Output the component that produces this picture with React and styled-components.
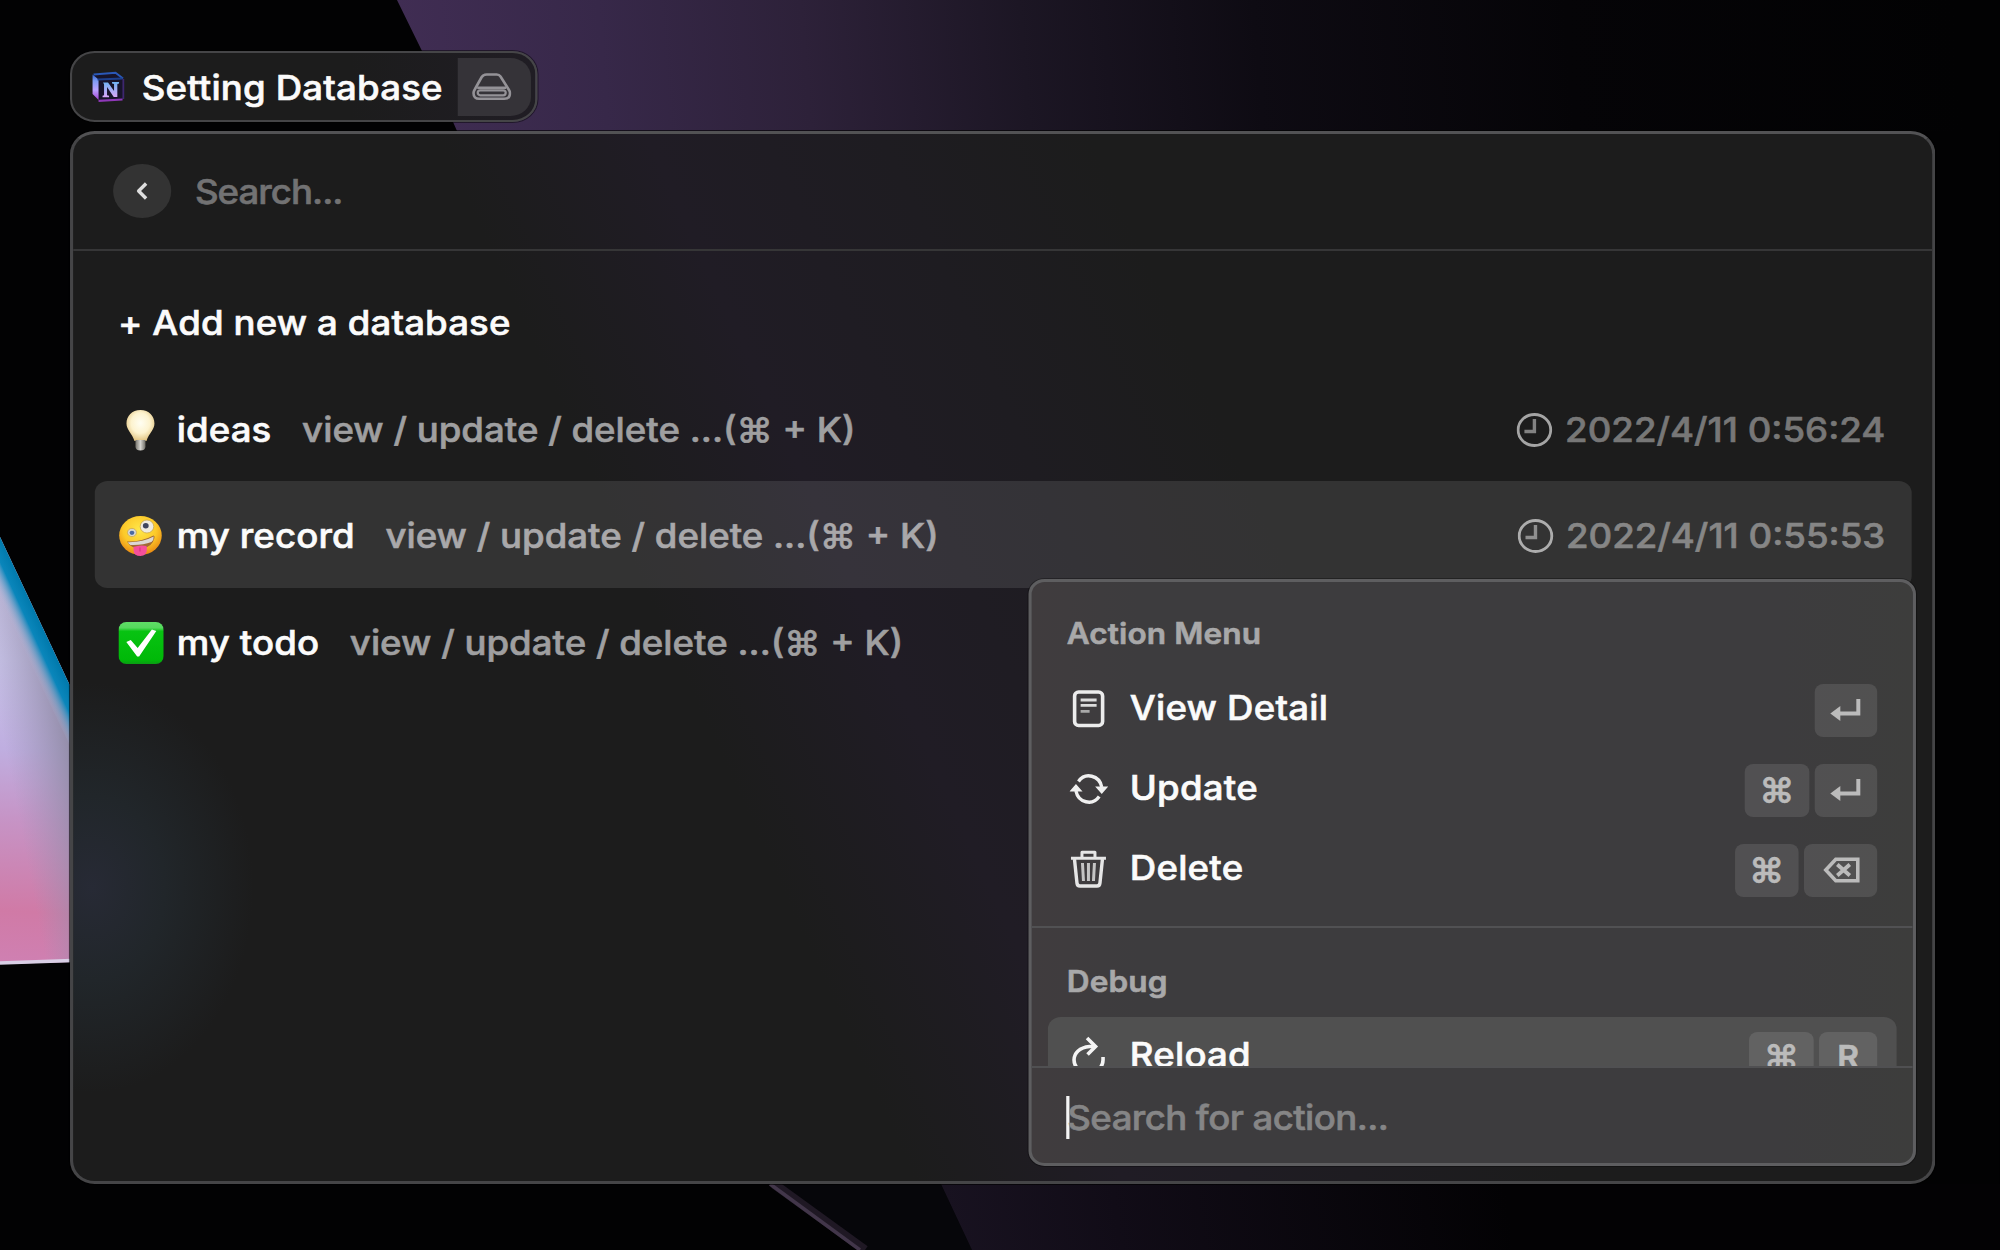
import React from 'react';
import styled, { createGlobalStyle, css } from 'styled-components';

/* The whole desktop is drawn slightly wider than its natural proportions. */
const STRETCH = 1.077;

const GlobalStyle = createGlobalStyle`
  *, *::before, *::after { box-sizing: border-box; }
  html, body { margin: 0; padding: 0; background: #000; }
  body {
    height: 1250px;
    overflow: hidden;
    font-family: Inter, "Liberation Sans", sans-serif;
    -webkit-font-smoothing: antialiased;
  }
`;

const Desktop = styled.main`
  position: relative;
  display: flex;
  flex-direction: column;
  align-items: flex-start;
  gap: 9px;
  width: 1857px;
  height: 1250px;
  padding: 51px 0 0 65px;
  overflow: hidden;
  transform: scaleX(${STRETCH});
  transform-origin: 0 0;
  background: #020203;
  font-size: 34px;
  font-weight: 500;
  letter-spacing: 0.1px;
  line-height: 40px;
  color: #fbfbfb;
  white-space: pre;
  -webkit-text-stroke: 0.6px currentColor;
`;

const Backdrop = styled.div`
  position: absolute;
  inset: 0;
  svg { display: block; }
`;

const CommandPill = styled.header`
  position: relative;
  display: flex;
  align-items: center;
  width: 434px;
  height: 71px;
  padding: 4px 4px 4px 18px;
  border: 2.5px solid #454547;
  border-radius: 23px;
  background: linear-gradient(90deg, #1c1c1c 60%, #201d24);
  box-shadow: 0 0 0 1px rgba(0, 0, 0, 0.45);
`;

const PillTitle = styled.h1`
  flex: 1;
  margin: 0 0 0 15px;
  padding-top: 2px;
  font: inherit;
  letter-spacing: 0.15px;
`;

const PillBadge = styled.div`
  display: flex;
  align-items: center;
  justify-content: center;
  width: 68px;
  height: 58px;
  padding-right: 5px;
  border-radius: 0 19px 19px 0;
  background: #353338;
`;

const Panel = styled.section`
  position: relative;
  display: flex;
  flex-direction: column;
  width: 1732px;
  height: 1053px;
  border: 3px solid #454547;
  border-top-color: #525254;
  border-radius: 23px;
  background:
    radial-gradient(ellipse 150px 205px at 1% 72%, #272a35 0%, #21262a 45%, rgba(28, 28, 28, 0) 100%),
    linear-gradient(67deg, #1c1c1c 36%, #201c25 45%, #1e1c21 55%, #1c1c1c 64%);
  box-shadow: 0 0 0 1px rgba(0, 0, 0, 0.6);
`;

const SearchBar = styled.div`
  display: flex;
  align-items: center;
  gap: 22px;
  height: 117px;
  padding: 0 37px 2px;
  border-bottom: 2px solid #363637;
`;

const BackButton = styled.button`
  display: flex;
  align-items: center;
  justify-content: center;
  width: 54px;
  height: 54px;
  padding: 0 1px 0 0;
  border: 0;
  border-radius: 50%;
  background: #333;
`;

const Placeholder = styled.span`
  padding-top: ${(p) => p.$drop || 2}px;
  letter-spacing: ${(p) => p.$tracking || -0.9}px;
  color: ${(p) => p.$color || '#727273'};
`;

const List = styled.ul`
  display: flex;
  flex-direction: column;
  margin: 0;
  padding: 17px 19.5px 0 20px;
  list-style: none;
`;

const ListRow = styled.li`
  display: flex;
  align-items: center;
  height: 106.6px;
  padding: 4px 24px 0 21.5px;
  border-radius: 12px;
  background: ${(p) => (p.$selected ? 'rgba(255, 255, 255, 0.1)' : 'transparent')};
`;

const Emoji = styled.span`
  display: flex;
  align-items: center;
  justify-content: center;
  width: 42px;
  margin-right: 12.5px;
`;

const Name = styled.span`
  margin-right: 28.5px;
`;

const Hint = styled.span`
  letter-spacing: 0;
  color: ${(p) => (p.$selected ? '#a9a8aa' : '#9f9fa0')};
`;

const Stamp = styled.time`
  display: flex;
  align-items: center;
  gap: 11.5px;
  margin-left: auto;
  letter-spacing: 0;
  color: ${(p) => (p.$selected ? '#868686' : '#777')};
`;

const ActionPopup = styled.aside`
  position: absolute;
  top: 445px;
  left: 887px;
  display: flex;
  flex-direction: column;
  width: 824px;
  height: 587px;
  border: 3px solid #5e5e60;
  border-radius: 15px;
  background: linear-gradient(90deg, #403c3e 0%, #3d3c3e 12%, #3d3c3e 85%, #3d3d3c 100%);
  overflow: hidden;
  box-shadow: 0 0 0 1px rgba(0, 0, 0, 0.3);
`;

const ActionScroll = styled.div`
  flex: none;
  height: 484px;
  overflow: hidden;
`;

const Section = styled.section`
  display: flex;
  flex-direction: column;
  height: ${(p) => p.$height || 'auto'};
  padding: 0 15px;
  ${(p) => p.$divided && css`border-bottom: 2px solid #515153;`}
`;

const SectionTitle = styled.h2`
  display: flex;
  align-items: center;
  flex: none;
  height: ${(p) => p.$height}px;
  margin: 0;
  padding: ${(p) => p.$drop}px 0 0 17.5px;
  font-size: 29.3px;
  font-weight: 600;
  letter-spacing: 0.1px;
  color: #a8a8a9;
`;

const ActionRow = styled.div`
  display: flex;
  align-items: center;
  flex: none;
  height: ${(p) => (p.$selected ? 82 : 80)}px;
  padding: 0 17.8px 0 20px;
  border-radius: 12px;
  background: ${(p) => (p.$selected ? '#505050' : 'transparent')};
`;

const ActionIcon = styled.span`
  display: flex;
  align-items: center;
  justify-content: center;
  width: 36px;
  margin-right: 20px;
  padding-bottom: 4px;
`;

const ActionLabel = styled.span`
  padding-bottom: 6px;
  letter-spacing: 0.2px;
`;

const Keys = styled.span`
  display: flex;
  gap: 5px;
  margin-left: auto;
`;

const Key = styled.kbd`
  display: flex;
  align-items: center;
  justify-content: center;
  width: ${(p) => p.$width}px;
  height: 53px;
  border-radius: 8px;
  background: rgba(255, 255, 255, 0.105);
  padding-bottom: 2px;
  font: 600 ${(p) => p.$size || 33}px/40px Inter, "Liberation Sans", sans-serif;
  letter-spacing: 0;
  color: #bbb;
`;

const ActionSearch = styled.div`
  display: flex;
  align-items: center;
  flex: 1;
  padding: 4px 32px 0;
  border-top: 2px solid #505052;
`;

const Caret = styled.i`
  width: 3px;
  height: 43px;
  margin-right: -2px;
  background: #f4f4f4;
`;

/* Icons use screen pixels for their view box. */
const Art = ({ w, h, children, ...rest }) => (
  <svg
    width={w / STRETCH}
    height={h}
    viewBox={`0 0 ${w} ${h}`}
    preserveAspectRatio="none"
    fill="none"
    aria-hidden="true"
    {...rest}
  >
    {children}
  </svg>
);

const Wallpaper = () => (
  <Art w={2000} h={1250}>
    <defs>
      <linearGradient id="violet" gradientUnits="userSpaceOnUse" x1="400" y1="60" x2="1950" y2="-60">
        <stop offset="0" stopColor="#402d53" />
        <stop offset="0.13" stopColor="#372849" />
        <stop offset="0.26" stopColor="#2d2139" />
        <stop offset="0.4" stopColor="#1c1624" />
        <stop offset="0.55" stopColor="#0e0b13" />
        <stop offset="0.75" stopColor="#050407" />
        <stop offset="1" stopColor="#020203" />
      </linearGradient>
      <linearGradient id="violetLow" gradientUnits="userSpaceOnUse" x1="950" y1="1230" x2="1500" y2="1150">
        <stop offset="0" stopColor="#181220" />
        <stop offset="0.3" stopColor="#110c17" />
        <stop offset="1" stopColor="#030204" />
      </linearGradient>
      <linearGradient id="petal" gradientUnits="userSpaceOnUse" x1="20" y1="560" x2="0" y2="963">
        <stop offset="0" stopColor="#cbc6e6" />
        <stop offset="0.25" stopColor="#c8c3e8" />
        <stop offset="0.47" stopColor="#bfaee0" />
        <stop offset="0.64" stopColor="#c694c6" />
        <stop offset="0.87" stopColor="#d07aa6" />
        <stop offset="1" stopColor="#cf80b2" />
      </linearGradient>
      <linearGradient id="petalShade" gradientUnits="userSpaceOnUse" x1="0" y1="780" x2="74" y2="766">
        <stop offset="0.15" stopColor="#9a94b4" stopOpacity="0" />
        <stop offset="1" stopColor="#8f8aa4" stopOpacity="0.9" />
      </linearGradient>
      <linearGradient id="rim" gradientUnits="userSpaceOnUse" x1="34" y1="609" x2="10" y2="620">
        <stop offset="0" stopColor="#0079ac" />
        <stop offset="0.42" stopColor="#0a86bb" />
        <stop offset="1" stopColor="#b9bde0" stopOpacity="0" />
      </linearGradient>
    </defs>
    <path d="M397 0L422 51L457 131H2000V0Z" fill="url(#violet)" />
    <path d="M769 1184L860 1250H972L941 1184Z" fill="#06060a" />
    <path d="M941 1184L972 1250H2000V1184Z" fill="url(#violetLow)" />
    <path d="M774 1184L865 1250" stroke="#1f1824" strokeWidth="9" />
    <path d="M770 1184L860 1250" stroke="#42364a" strokeWidth="3.500" />
    <path d="M0 537L72 690V962L0 964Z" fill="url(#petal)" />
    <path d="M0 537L72 690V962L0 964Z" fill="url(#petalShade)" />
    <path d="M0 537L72 690V750L0 600Z" fill="url(#rim)" />
    <path d="M0 963L72 960.500" stroke="#d9cfe6" strokeWidth="3.500" />
  </Art>
);

const WorkspaceLogo = () => (
  <Art w={34} h={32}>
    <defs>
      <linearGradient id="logoSide" x1="0" y1="0" x2="0" y2="1">
        <stop offset="0" stopColor="#2f62d8" />
        <stop offset="0.25" stopColor="#7d9cf2" />
        <stop offset="0.6" stopColor="#b9a2ff" />
        <stop offset="1" stopColor="#a03fd0" />
      </linearGradient>
      <linearGradient id="logoN" x1="0" y1="0" x2="0" y2="1">
        <stop offset="0" stopColor="#6fb4f4" />
        <stop offset="1" stopColor="#d9a6f7" />
      </linearGradient>
    </defs>
    <path d="M2 4L25 2L31 7V28L9 30L2 24Z" fill="#17142a" />
    <path d="M1 3.500L7 8.500V29L1 23Z" fill="url(#logoSide)" />
    <path d="M2 3.500L24 1.800L31.500 7.500" stroke="#2a58b8" strokeWidth="2" />
    <path d="M6 8.500L31 7.500" stroke="#1d3f8c" strokeWidth="2" />
    <path d="M31.800 8V28" stroke="#3d2670" strokeWidth="1.800" />
    <path d="M7 29.800L31 28.500" stroke="#8f38b8" strokeWidth="2.200" />
    <path
      d="M11.500 11.500H16.500L22.500 20V13L20.500 12.500V11H27.500V12.500L25.800 13V26H22.200L15.500 16V24.200L17.500 24.800V26.300H11V24.800L12.500 24.200V13.200Z"
      fill="url(#logoN)"
    />
  </Art>
);

const DriveIcon = () => (
  <Art w={40} h={28}>
    <path
      d="M11.500 2.500Q13 1.500 15 1.500H25Q27.500 1.500 28.800 3.500L37 16.500Q38.300 18.500 38.300 20Q38.300 25.800 32.500 25.800H7.500Q1.800 25.800 1.800 20Q1.800 18.500 3 16.500L10 4Z"
      stroke="#949297"
      strokeWidth="2.600"
      strokeLinejoin="round"
    />
    <path d="M5.500 14.700H34.500" stroke="#949297" strokeWidth="2.600" />
    <rect x="6" y="17.300" width="28" height="5" rx="2.500" stroke="#949297" strokeWidth="2.200" />
  </Art>
);

const ChevronIcon = () => (
  <Art w={14} h={20}>
    <path d="M11.500 2.500L4 10L11.500 17.500" stroke="#dedede" strokeWidth="3.400" strokeLinejoin="round" />
  </Art>
);

const ClockIcon = () => (
  <Art w={36} h={34}>
    <ellipse cx="18" cy="17" rx="16.300" ry="15.500" stroke="rgba(255,255,255,.6)" strokeWidth="2.800" />
    <path d="M18 6V18.500H8" stroke="rgba(255,255,255,.45)" strokeWidth="3.400" />
  </Art>
);

const BulbEmoji = () => (
  <Art w={44} h={42}>
    <defs>
      <radialGradient id="bulb" cx="0.5" cy="0.42" r="0.6">
        <stop offset="0" stopColor="#fffef2" />
        <stop offset="0.55" stopColor="#fdf3cf" />
        <stop offset="1" stopColor="#dfc07c" />
      </radialGradient>
      <linearGradient id="socket" x1="0" y1="0" x2="1" y2="0">
        <stop offset="0" stopColor="#77756d" />
        <stop offset="0.5" stopColor="#d6d5d0" />
        <stop offset="1" stopColor="#6f6d66" />
      </linearGradient>
    </defs>
    <path d="M22 1C13.500 1 8 7 8 14.500C8 21 13.500 24 16 32H28C30.500 24 36 21 36 14.500C36 7 30.500 1 22 1Z" fill="url(#bulb)" />
    <path d="M17 31H27V38Q26.500 41.500 22 41.500Q17.500 41.500 17 38Z" fill="url(#socket)" />
  </Art>
);

const ZanyEmoji = () => (
  <Art w={44} h={42}>
    <defs>
      <radialGradient id="face" cx="0.48" cy="0.35" r="0.65">
        <stop offset="0" stopColor="#ffe84a" />
        <stop offset="0.6" stopColor="#fcc92a" />
        <stop offset="1" stopColor="#e98a12" />
      </radialGradient>
    </defs>
    <ellipse cx="22" cy="20.500" rx="21.300" ry="19.500" fill="url(#face)" />
    <ellipse cx="28.500" cy="11.500" rx="6.800" ry="6.500" fill="#efebe0" stroke="#c5a24a" strokeWidth="0.700" />
    <ellipse cx="27.300" cy="10.800" rx="2.900" ry="2.700" fill="#3f4660" />
    <ellipse cx="13.500" cy="17.500" rx="4.500" ry="4.100" fill="#d8d8d2" stroke="#c5a24a" strokeWidth="0.700" />
    <ellipse cx="13.500" cy="17.800" rx="2.400" ry="2.100" fill="#4b69a0" />
    <path d="M8.500 26.500Q23 27 35 20.500Q36.500 20.500 36 23Q33.500 32.500 23.500 33.500Q12.500 34 8.500 26.500Z" fill="#a06a34" />
    <path d="M9.500 27.200Q24 27.500 35.200 21.500Q35.500 25 33 27Q24 30.500 12 30Q10 29 9.500 27.200Z" fill="#dcd8d4" />
    <path d="M15 32Q21.500 29.500 28 31L28.500 34Q28.500 41 22 41Q15.500 41 15.200 36Z" fill="#f5509b" />
    <path d="M21.500 32.500V36.500" stroke="#d63480" strokeWidth="1.200" />
  </Art>
);

const CheckEmoji = () => (
  <Art w={46} h={42}>
    <defs>
      <linearGradient id="tile" x1="0" y1="0" x2="0" y2="1">
        <stop offset="0" stopColor="#5fdd66" />
        <stop offset="0.14" stopColor="#55d95d" />
        <stop offset="0.22" stopColor="#08c312" />
        <stop offset="0.9" stopColor="#00b908" />
        <stop offset="1" stopColor="#0a9c14" />
      </linearGradient>
    </defs>
    <rect x="0" y="0" width="46" height="42" rx="8" fill="url(#tile)" />
    <path d="M8 20L12.500 18L19.500 26L34 7.500L38.500 9L21 34.500H19Z" fill="#fff" />
  </Art>
);

const DetailIcon = () => (
  <Art w={34} h={40}>
    <rect x="3" y="3" width="28" height="33.500" rx="4" stroke="#ececec" strokeWidth="3.600" />
    <path d="M9 11H25M9 16.300H25" stroke="#dcdcdc" strokeWidth="2.800" />
    <path d="M9 22.300H18" stroke="#a9a9a9" strokeWidth="2.800" />
  </Art>
);

const UpdateIcon = () => (
  <Art w={40} h={34}>
    <path d="M9.300 9.500A13.500 14 0 0 1 33.300 15M30.700 24.500A13.500 14 0 0 1 6.700 19" stroke="#f0f0f0" strokeWidth="3.500" />
    <path d="M26.500 14.500H40L33.300 22ZM0 19.500H13.500L6.700 12Z" fill="#f0f0f0" />
  </Art>
);

const TrashIcon = () => (
  <Art w={38} h={40}>
    <path d="M1.500 9.300H36.500" stroke="#e6e6e6" strokeWidth="3" />
    <path d="M12.500 8.500V3.200H25.500V8.500" stroke="#e6e6e6" strokeWidth="3" strokeLinejoin="round" />
    <path d="M5 10L7.500 34Q7.800 37 10.500 37H27.500Q30.200 37 30.500 34L33 10" stroke="#e6e6e6" strokeWidth="3.400" />
    <path d="M13 14L14 32M19 14V32M25 14L24 32" stroke="#c4c4c4" strokeWidth="3" />
  </Art>
);

const ReloadIcon = () => (
  <Art w={36} h={40}>
    <path d="M23 10.500H19C9 11.500 3.500 17 3.500 24A14.500 13 0 0 0 32.500 24V21" stroke="#f4f4f4" strokeWidth="3.600" />
    <path d="M16.500 2L25 10.500L17 18.500" stroke="#f4f4f4" strokeWidth="3.600" />
  </Art>
);

const ReturnIcon = () => (
  <Art w={32} h={24}>
    <path d="M28.500 1V15.500H7" stroke="#bbb" strokeWidth="4" />
    <path d="M0.500 15.500L10.500 8V23Z" fill="#bbb" />
  </Art>
);

const BackspaceIcon = () => (
  <Art w={38} h={26}>
    <path d="M3.500 13L13.500 2.200H35.500V23.800H13.500Z" stroke="#bbb" strokeWidth="3.600" />
    <path d="M15 7.500L27.500 18.500M27.500 7.500L15 18.500" stroke="#bbb" strokeWidth="3.800" />
  </Art>
);

const KEY_CAPS = {
  cmd: () => <Key $width={59.5}>⌘</Key>,
  enter: () => <Key $width={58.7}><ReturnIcon /></Key>,
  backspace: () => <Key $width={68}><BackspaceIcon /></Key>,
  r: () => <Key $width={54.5} $size={31}>R</Key>,
};

const DATABASES = [
  { name: 'ideas', icon: BulbEmoji, edited: '2022/4/11 0:56:24' },
  { name: 'my record', icon: ZanyEmoji, edited: '2022/4/11 0:55:53', selected: true },
  { name: 'my todo', icon: CheckEmoji },
];

const ACTIONS = [
  { label: 'View Detail', icon: DetailIcon, keys: ['enter'] },
  { label: 'Update', icon: UpdateIcon, keys: ['cmd', 'enter'] },
  { label: 'Delete', icon: TrashIcon, keys: ['cmd', 'backspace'] },
];

const DEBUG_ACTIONS = [{ label: 'Reload', icon: ReloadIcon, keys: ['cmd', 'r'], selected: true }];

const DatabaseRow = ({ name, icon: Icon, edited, selected }) => (
  <ListRow $selected={selected}>
    <Emoji><Icon /></Emoji>
    <Name>{name}</Name>
    <Hint $selected={selected}>view / update / delete ...(⌘ + K)</Hint>
    {edited && (
      <Stamp $selected={selected}>
        <ClockIcon />
        {edited}
      </Stamp>
    )}
  </ListRow>
);

const Action = ({ label, icon: Icon, keys, selected }) => (
  <ActionRow $selected={selected}>
    <ActionIcon><Icon /></ActionIcon>
    <ActionLabel>{label}</ActionLabel>
    <Keys>
      {keys.map((k) => {
        const Cap = KEY_CAPS[k];
        return <Cap key={k} />;
      })}
    </Keys>
  </ActionRow>
);

export default function App() {
  return (
    <>
      <GlobalStyle />
      <Desktop>
        <Backdrop><Wallpaper /></Backdrop>
        <CommandPill>
          <WorkspaceLogo />
          <PillTitle>Setting Database</PillTitle>
          <PillBadge><DriveIcon /></PillBadge>
        </CommandPill>
        <Panel>
          <SearchBar>
            <BackButton aria-label="Back"><ChevronIcon /></BackButton>
            <Placeholder>Search...</Placeholder>
          </SearchBar>
          <List>
            <ListRow>+ Add new a database</ListRow>
            {DATABASES.map((d) => <DatabaseRow key={d.name} {...d} />)}
          </List>
          <ActionPopup>
            <ActionScroll>
              <Section $divided $height="346px">
                <SectionTitle $height={88.5} $drop={15.5}>Action Menu</SectionTitle>
                {ACTIONS.map((a) => <Action key={a.label} {...a} />)}
              </Section>
              <Section>
                <SectionTitle $height={89} $drop={19}>Debug</SectionTitle>
                {DEBUG_ACTIONS.map((a) => <Action key={a.label} {...a} />)}
              </Section>
            </ActionScroll>
            <ActionSearch>
              <Caret />
              <Placeholder $drop={1} $tracking={-0.55} $color="#858586">Search for action...</Placeholder>
            </ActionSearch>
          </ActionPopup>
        </Panel>
      </Desktop>
    </>
  );
}
